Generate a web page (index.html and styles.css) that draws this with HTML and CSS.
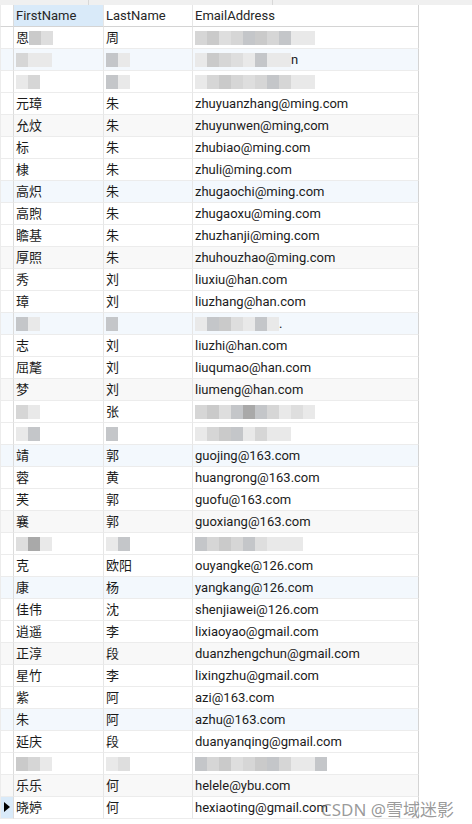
FILE: index.html
```html
<!DOCTYPE html>
<html lang="zh">
<head>
<meta charset="utf-8">
<title>Grid</title>
<link rel="stylesheet" href="styles.css">
</head>
<body>
<div class="page">
  <div class="topstrip"><span class="tick t1"></span><span class="tick t2"></span></div>
  <div class="grid">
    <div class="rh hdr"></div><div class="c hdr sel">FirstName</div><div class="c hdr">LastName</div><div class="c hdr last">EmailAddress</div>

    <div class="rh"></div><div class="c">恩<span class="mz"><i class="b"></i><i class="c2"></i></span></div><div class="c">周</div><div class="c last"><span class="mz"><i class="a"></i><i class="b"></i><i class="c2"></i><i class="a"></i><i class="d"></i><i class="b"></i><i class="a"></i><i class="d"></i><i class="e"></i><i class="e"></i></span></div>
    <div class="rh blue"></div><div class="c blue"><span class="mz"><i class="a"></i><i class="e"></i><i class="e"></i></span></div><div class="c blue"><span class="mz"><i class="d"></i><i class="e"></i></span></div><div class="c last blue"><span class="mz"><i class="e"></i><i class="b"></i><i class="a"></i><i class="c2"></i><i class="e"></i><i class="d"></i><i class="e"></i><i class="e"></i></span>n</div>
    <div class="rh"></div><div class="c"><span class="mz"><i class="e"></i><i class="a"></i></span></div><div class="c"><span class="mz"><i class="d"></i><i class="e"></i></span></div><div class="c last"><span class="mz"><i class="e"></i><i class="a"></i><i class="b"></i><i class="a"></i><i class="c2"></i><i class="a"></i><i class="d"></i><i class="a"></i><i class="e"></i><i class="e"></i></span></div>
    <div class="rh"></div><div class="c">元璋</div><div class="c">朱</div><div class="c last">zhuyuanzhang@ming.com</div>
    <div class="rh gray"></div><div class="c gray">允炆</div><div class="c gray">朱</div><div class="c last gray">zhuyunwen@ming,com</div>
    <div class="rh"></div><div class="c">标</div><div class="c">朱</div><div class="c last">zhubiao@ming.com</div>
    <div class="rh"></div><div class="c">棣</div><div class="c">朱</div><div class="c last">zhuli@ming.com</div>
    <div class="rh blue"></div><div class="c blue">高炽</div><div class="c blue">朱</div><div class="c last blue">zhugaochi@ming.com</div>
    <div class="rh"></div><div class="c">高煦</div><div class="c">朱</div><div class="c last">zhugaoxu@ming.com</div>
    <div class="rh"></div><div class="c">瞻基</div><div class="c">朱</div><div class="c last">zhuzhanji@ming.com</div>
    <div class="rh gray"></div><div class="c gray">厚照</div><div class="c gray">朱</div><div class="c last gray">zhuhouzhao@ming.com</div>
    <div class="rh"></div><div class="c">秀</div><div class="c">刘</div><div class="c last">liuxiu@han.com</div>
    <div class="rh"></div><div class="c">璋</div><div class="c">刘</div><div class="c last">liuzhang@han.com</div>
    <div class="rh blue"></div><div class="c blue"><span class="mz"><i class="d"></i><i class="e"></i></span></div><div class="c blue"><span class="mz"><i class="d"></i></span></div><div class="c last blue"><span class="mz"><i class="e"></i><i class="d"></i><i class="b"></i><i class="c2"></i><i class="e"></i><i class="d"></i><i class="e"></i></span>.</div>
    <div class="rh"></div><div class="c">志</div><div class="c">刘</div><div class="c last">liuzhi@han.com</div>
    <div class="rh"></div><div class="c">屈氂</div><div class="c">刘</div><div class="c last">liuqumao@han.com</div>
    <div class="rh gray"></div><div class="c gray">梦</div><div class="c gray">刘</div><div class="c last gray">liumeng@han.com</div>
    <div class="rh"></div><div class="c"><span class="mz"><i class="a"></i><i class="e"></i></span></div><div class="c">张</div><div class="c last"><span class="mz"><i class="a"></i><i class="b"></i><i class="c2"></i><i class="d"></i><i class="f"></i><i class="d"></i><i class="a"></i><i class="e"></i><i class="c2"></i><i class="e"></i></span></div>
    <div class="rh"></div><div class="c"><span class="mz"><i class="e"></i><i class="d"></i></span></div><div class="c"><span class="mz"><i class="d"></i></span></div><div class="c last"><span class="mz"><i class="e"></i><i class="a"></i><i class="b"></i><i class="d"></i><i class="e"></i><i class="a"></i><i class="e"></i><i class="e"></i></span></div>
    <div class="rh blue"></div><div class="c blue">靖</div><div class="c blue">郭</div><div class="c last blue">guojing@163.com</div>
    <div class="rh"></div><div class="c">蓉</div><div class="c">黄</div><div class="c last">huangrong@163.com</div>
    <div class="rh"></div><div class="c">芙</div><div class="c">郭</div><div class="c last">guofu@163.com</div>
    <div class="rh gray"></div><div class="c gray">襄</div><div class="c gray">郭</div><div class="c last gray">guoxiang@163.com</div>
    <div class="rh"></div><div class="c"><span class="mz"><i class="c2"></i><i class="f"></i><i class="e"></i></span></div><div class="c"><span class="mz"><i class="e"></i><i class="d"></i></span></div><div class="c last"><span class="mz"><i class="d"></i><i class="a"></i><i class="b"></i><i class="a"></i><i class="d"></i><i class="c2"></i><i class="e"></i><i class="e"></i><i class="e"></i></span></div>
    <div class="rh"></div><div class="c">克</div><div class="c">欧阳</div><div class="c last">ouyangke@126.com</div>
    <div class="rh blue"></div><div class="c blue">康</div><div class="c blue">杨</div><div class="c last blue">yangkang@126.com</div>
    <div class="rh"></div><div class="c">佳伟</div><div class="c">沈</div><div class="c last">shenjiawei@126.com</div>
    <div class="rh"></div><div class="c">逍遥</div><div class="c">李</div><div class="c last">lixiaoyao@gmail.com</div>
    <div class="rh gray"></div><div class="c gray">正淳</div><div class="c gray">段</div><div class="c last gray">duanzhengchun@gmail.com</div>
    <div class="rh"></div><div class="c">星竹</div><div class="c">李</div><div class="c last">lixingzhu@gmail.com</div>
    <div class="rh"></div><div class="c">紫</div><div class="c">阿</div><div class="c last">azi@163.com</div>
    <div class="rh blue"></div><div class="c blue">朱</div><div class="c blue">阿</div><div class="c last blue">azhu@163.com</div>
    <div class="rh"></div><div class="c">延庆</div><div class="c">段</div><div class="c last">duanyanqing@gmail.com</div>
    <div class="rh"></div><div class="c"><span class="mz"><i class="b"></i><i class="a"></i><i class="e"></i></span></div><div class="c"><span class="mz"><i class="e"></i><i class="c2"></i></span></div><div class="c last"><span class="mz"><i class="d"></i><i class="a"></i><i class="b"></i><i class="c2"></i><i class="a"></i><i class="b"></i><i class="d"></i><i class="a"></i><i class="e"></i><i class="e"></i><i class="d"></i></span></div>
    <div class="rh gray"></div><div class="c gray">乐乐</div><div class="c gray">何</div><div class="c last gray">helele@ybu.com</div>
    <div class="rh cur"><span class="arrow"></span></div><div class="c">晓婷</div><div class="c">何</div><div class="c last">hexiaoting@gmail.com</div>
  </div>
  <div class="watermark">CSDN @雪域迷影</div>
</div>
</body>
</html>
```

FILE: styles.css
```css
html, body {
  margin: 0;
  padding: 0;
  background: #ffffff;
}

.page {
  position: relative;
  width: 472px;
  height: 824px;
  overflow: hidden;
  font-family: Roboto, "Noto Sans CJK SC", sans-serif;
  font-size: 13px;
  color: #1b1b1b;
}

.topstrip {
  position: relative;
  height: 5px;
  background: #f0f0f0;
}

.tick {
  position: absolute;
  top: 0;
  width: 1px;
  height: 5px;
  background: #d8d8d8;
}
.t1 { left: 88px; }
.t2 { left: 272px; }

.grid {
  display: grid;
  grid-template-columns: 14px 90px 89px 226px;
  grid-auto-rows: 22px;
  width: 419px;
}

.rh, .c {
  box-sizing: border-box;
  border-right: 1px solid #e6e6e6;
  border-bottom: 1px solid #ececec;
  height: 22px;
  white-space: nowrap;
  overflow: hidden;
}

.rh {
  position: relative;
  background: #ffffff;
  border-left: 1px solid #ececec;
  border-right-color: #dcdcdc;
}

.c {
  display: flex;
  align-items: center;
  padding-left: 2px;
  line-height: 21px;
}

.c.last {
  border-right: 1px solid #d4d4d4;
}

.hdr {
  height: 22px;
  border-bottom: 1px solid #d4d4d4;
  color: #262626;
  background: #ffffff;
}

.hdr.sel {
  background: #d9eaf9;
}

.blue { background: #f3f8fd; }
.gray { background: #f8f8f8; }

.rh.cur {
  background: #d9eaf9;
}

.arrow {
  position: absolute;
  left: 3px;
  top: 5px;
  width: 0;
  height: 0;
  border-top: 5px solid transparent;
  border-bottom: 5px solid transparent;
  border-left: 6px solid #000000;
}

.mz {
  display: inline-flex;
  align-items: center;
  height: 14px;
}

.mz i {
  display: inline-block;
  width: 12px;
  height: 14px;
}
.mz .a { background: #d6d6d6; }
.mz .b { background: #cacaca; }
.mz .c2 { background: #dedede; }
.mz .d { background: #c4c6c9; }
.mz .e { background: #e9e9e9; }
.mz .f { background: #a9a9a9; }

.watermark {
  position: absolute;
  left: 321px;
  top: 796px;
  font-family: "Noto Sans", "Noto Sans CJK SC", sans-serif;
  font-size: 17px;
  color: rgba(110, 110, 110, 0.7);
}
```
